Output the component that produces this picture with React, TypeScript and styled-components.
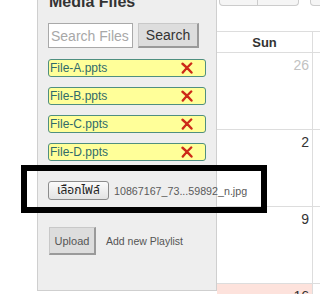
import React from "react";
import styled, { createGlobalStyle } from "styled-components";

const Global = createGlobalStyle`
  html, body { margin: 0; padding: 0; background: #fff; overflow: hidden; }
  body { font-family: "Liberation Sans", Arial, sans-serif; }
`;

const Page = styled.div`
  position: relative;
  width: 320px;
  height: 294px;
  overflow: hidden;
`;

const Layout = styled.div`
  display: flex;
  margin-top: -12px;
  padding-left: 37px;
`;

const Panel = styled.div`
  box-sizing: border-box;
  width: 180px;
  height: 303px;
  flex: none;
  background: #eeeeee;
  border: 1px solid #cfcfcf;
  padding: 4px 10px 0 10px;
  display: flex;
  flex-direction: column;
  position: relative;
  z-index: 1;
`;

const Title = styled.h2`
  margin: 0 0 12px 1px;
  font-size: 16px;
  line-height: 18px;
  font-weight: bold;
  color: #333;
`;

const SearchRow = styled.div`
  display: flex;
  gap: 5px;
  height: 25px;
`;

const SearchInput = styled.input`
  box-sizing: border-box;
  width: 85px;
  height: 25px;
  margin: 0;
  padding: 0 2px;
  border: 1px solid #a9a9a9;
  background: #fff;
  font-family: "Liberation Sans", Arial, sans-serif;
  font-size: 14px;
  color: #333;
  outline: none;
  &::placeholder { color: #a8a8a8; }
`;

const GrayButton = styled.button<{ $w: number; $h: number; $size: number }>`
  box-sizing: border-box;
  flex: none;
  width: ${(p) => p.$w}px;
  height: ${(p) => p.$h}px;
  margin: 0;
  padding: 0;
  background: #dddddd;
  border: 1px solid #c8c8c8;
  border-right: 2px solid #9a9a9a;
  border-bottom: 2px solid #9a9a9a;
  font-family: "Liberation Sans", Arial, sans-serif;
  font-size: ${(p) => p.$size}px;
  color: ${(p) => (p.$size > 12 ? "#333" : "#555")};
  cursor: pointer;
`;

const FileList = styled.div`
  display: flex;
  flex-direction: column;
  gap: 10px;
  margin-top: 11px;
`;

const FileItem = styled.div`
  box-sizing: border-box;
  height: 18px;
  display: flex;
  align-items: center;
  justify-content: space-between;
  background: #ffff99;
  border: 1px solid #4f8f80;
  border-radius: 3px;
  padding: 0 12px 0 1px;
  font-size: 12px;
  color: #2f6b6b;
`;

const RemoveIcon = () => (
  <svg width="12" height="12" viewBox="0 0 12 12">
    <path d="M1.5 1.8 Q6 5.5 10.5 10.5 M10.2 1.5 Q5.5 6 1.8 10.5" stroke="#cc2a18" strokeWidth="2.4" strokeLinecap="round" fill="none" />
  </svg>
);

const FileInputRow = styled.div`
  display: flex;
  align-items: center;
  gap: 5px;
  margin-top: 20px;
  height: 19px;
  white-space: nowrap;
`;

const ChooseButton = styled.button`
  box-sizing: border-box;
  flex: none;
  width: 61px;
  height: 19px;
  margin: 0;
  padding: 0;
  background: linear-gradient(#fbfbfb, #e3e3e3);
  border: 1px solid #8c8c8c;
  border-radius: 3px;
  font-family: "Liberation Sans", "Noto Sans Thai", "DejaVu Sans", sans-serif;
  font-size: 12px;
  line-height: 17px;
  color: #222;
`;

const FileName = styled.span`
  font-size: 10.7px;
  color: #5a5a5a;
`;

const UploadRow = styled.div`
  display: flex;
  align-items: flex-start;
  gap: 10px;
  margin-top: 27px;
  padding-left: 1px;
`;

const LinkText = styled.span`
  margin-top: 8px;
  font-size: 10.5px;
  line-height: 12px;
  color: #555;
`;

const Calendar = styled.div`
  flex: 1;
  display: flex;
  flex-direction: column;
`;

const Toolbar = styled.div`
  display: flex;
  height: 18px;
  padding-left: 2px;
  gap: 11px;
`;

const BtnGroup = styled.div`
  display: flex;
`;

const NavBtn = styled.div<{ $w: number; $pos: "left" | "right" | "single" }>`
  box-sizing: border-box;
  width: ${(p) => p.$w}px;
  height: 18px;
  background: #f5f5f5;
  border: 1px solid #cccccc;
  border-top: none;
  ${(p) => (p.$pos === "right" ? "border-left: none;" : "")}
  border-radius: ${(p) =>
    p.$pos === "left" ? "0 0 0 4px" : p.$pos === "right" ? "0 0 4px 0" : "0 0 0 4px"};
`;

const Grid = styled.div`
  margin-top: 25px;
  display: grid;
  grid-template-columns: 96px 1fr;
  grid-template-rows: 21px 77px 77px 77px 77px;
  border-top: 1px solid #dddddd;
`;

const HeadCell = styled.div`
  border-right: 1px solid #dddddd;
  border-bottom: 1px solid #dddddd;
  display: flex;
  align-items: center;
  justify-content: center;
  font-size: 13px;
  font-weight: bold;
  color: #333;
`;

const DayCell = styled.div<{ $other?: boolean; $today?: boolean }>`
  border-right: 1px solid #dddddd;
  border-bottom: 1px solid #dddddd;
  background: ${(p) => (p.$today ? "#fde2dc" : "transparent")};
  text-align: right;
  padding: 4px 3px 0 0;
  font-size: 14px;
  line-height: 16px;
  color: ${(p) => (p.$other ? "#c2c2c2" : "#333")};
`;

const Annotation = styled.div`
  position: absolute;
  left: 21px;
  top: 165px;
  width: 246px;
  height: 48px;
  box-sizing: border-box;
  border: 6px solid #000;
  z-index: 5;
  pointer-events: none;
`;

const files = ["File-A.ppts", "File-B.ppts", "File-C.ppts", "File-D.ppts"];
const weeks = [
  { sun: "26", other: true },
  { sun: "2" },
  { sun: "9" },
  { sun: "16", today: true },
];

export default function App() {
  return (
    <Page>
      <Global />
      <Layout>
        <Panel>
          <Title>Media Files</Title>
          <SearchRow>
            <SearchInput placeholder="Search Files" />
            <GrayButton $w={61} $h={25} $size={14}>Search</GrayButton>
          </SearchRow>
          <FileList>
            {files.map((f) => (
              <FileItem key={f}>
                <span>{f}</span>
                <RemoveIcon />
              </FileItem>
            ))}
          </FileList>
          <FileInputRow>
            <ChooseButton>เลือกไฟล์</ChooseButton>
            <FileName>10867167_73...59892_n.jpg</FileName>
          </FileInputRow>
          <UploadRow>
            <GrayButton $w={47} $h={28} $size={11}>Upload</GrayButton>
            <LinkText>Add new Playlist</LinkText>
          </UploadRow>
        </Panel>
        <Calendar>
          <Toolbar>
            <BtnGroup>
              <NavBtn $w={39} $pos="left" />
              <NavBtn $w={41} $pos="right" />
            </BtnGroup>
            <NavBtn $w={40} $pos="single" />
          </Toolbar>
          <Grid>
            <HeadCell>Sun</HeadCell>
            <HeadCell />
            {weeks.map((w) => (
              <React.Fragment key={w.sun}>
                <DayCell $other={w.other} $today={w.today}>{w.sun}</DayCell>
                <DayCell $other={w.other} />
              </React.Fragment>
            ))}
          </Grid>
        </Calendar>
      </Layout>
      <Annotation />
    </Page>
  );
}
